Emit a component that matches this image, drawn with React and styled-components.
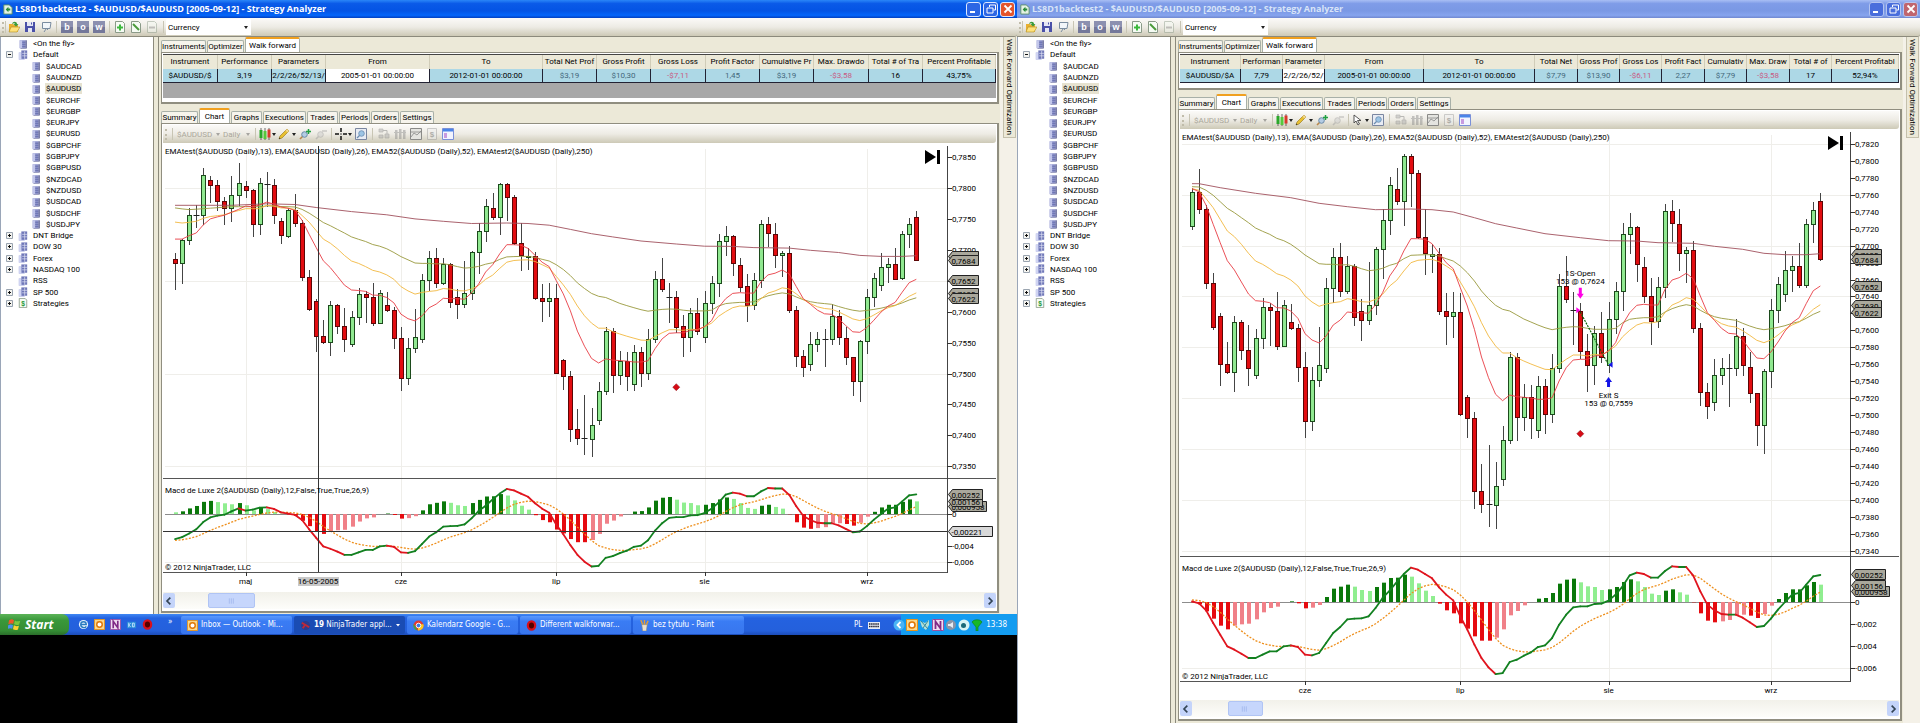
import React from "react";
import styled, { createGlobalStyle, css } from "styled-components";

const UI_FONT = 'Roboto, "Liberation Sans", sans-serif';
const CHART_FONT = 'Roboto, "Liberation Sans", sans-serif';

const GlobalStyle = createGlobalStyle`
  * { box-sizing: border-box; }
  body { margin: 0; background: #000; font-family: ${UI_FONT}; font-size: 8px; line-height: 11px; color: #000; }
  button, select { font: inherit; color: inherit; margin: 0; padding: 0; border: 0; background: none; }
  ul { list-style: none; margin: 0; padding: 0; }
`;

/* ---------- market data ---------- */

const TICKS_PER_PIP = 2.5417;
const toPips = (t) => 7837.3 - t / TICKS_PER_PIP;

// [direction, body top, body bottom, high, low], in ticks below the ceiling price
const CANDLES = [
  ["d", 387, 405, 362, 516], ["u", 309, 405, 305, 490], ["u", 207, 309, 177, 329], ["x", 205, 207, 164, 261],
  ["u", 42, 206, 14, 247], ["d", 62, 83, 44, 157], ["d", 83, 149, 62, 191], ["d", 149, 179, 132, 247],
  ["u", 125, 179, 47, 233], ["u", 75, 125, -6, 168], ["d", 88, 103, 65, 136], ["d", 103, 244, 99, 298],
  ["u", 75, 244, 55, 290], ["x", 77, 80, 29, 175], ["d", 82, 206, 60, 243], ["d", 232, 290, 218, 327],
  ["u", 187, 291, 177, 301], ["d", 187, 240, 119, 255], ["d", 240, 460, 228, 478], ["d", 460, 593, 430, 602],
  ["d", 560, 703, 550, 770], ["d", 703, 727, 638, 735], ["u", 577, 727, 560, 787], ["d", 577, 661, 573, 693],
  ["d", 661, 716, 586, 770], ["u", 626, 737, 600, 750], ["u", 532, 626, 505, 658], ["d", 532, 543, 520, 650],
  ["d", 544, 650, 487, 661], ["u", 526, 650, 513, 654], ["d", 577, 597, 524, 603], ["d", 596, 712, 585, 757],
  ["d", 712, 875, 667, 927], ["u", 751, 875, 712, 905], ["u", 706, 751, 594, 773], ["u", 475, 715, 447, 732],
  ["u", 384, 475, 355, 520], ["d", 384, 486, 342, 504], ["u", 409, 486, 381, 494], ["d", 409, 564, 404, 590],
  ["d", 544, 572, 508, 635], ["u", 526, 572, 397, 587], ["u", 358, 526, 352, 556], ["u", 271, 358, 240, 450],
  ["u", 168, 271, 142, 317], ["d", 178, 214, 117, 227], ["u", 79, 214, 74, 290], ["d", 79, 132, 74, 232],
  ["d", 132, 323, 123, 328], ["d", 322, 371, 238, 437], ["u", 373, 379, 343, 431], ["d", 373, 545, 356, 557],
  ["d", 545, 560, 491, 647], ["u", 547, 560, 487, 626], ["d", 547, 854, 491, 859], ["d", 802, 866, 798, 926],
  ["d", 867, 1085, 847, 1138], ["d", 1084, 1124, 1003, 1150], ["x", 1123, 1125, 947, 1193], ["u", 1070, 1126, 998, 1200],
  ["u", 931, 1049, 890, 1070], ["u", 682, 931, 667, 945], ["d", 682, 863, 672, 936], ["u", 804, 863, 763, 905],
  ["d", 804, 867, 768, 929], ["u", 769, 901, 740, 927], ["d", 769, 854, 750, 914], ["u", 716, 854, 673, 882],
  ["u", 469, 716, 434, 732], ["d", 469, 509, 381, 521], ["x", 542, 544, 487, 648], ["d", 544, 665, 520, 689],
  ["d", 664, 707, 615, 789], ["u", 610, 707, 590, 767], ["d", 610, 682, 547, 700], ["u", 568, 707, 517, 730],
  ["u", 484, 568, 458, 613], ["u", 313, 484, 282, 544], ["u", 292, 314, 250, 373], ["d", 292, 404, 290, 457],
  ["d", 412, 500, 384, 521], ["d", 499, 575, 447, 647], ["u", 472, 575, 444, 596], ["u", 244, 472, 225, 505],
  ["d", 244, 281, 213, 338], ["d", 283, 371, 240, 425], ["u", 361, 371, 354, 462], ["d", 361, 595, 334, 610],
  ["d", 595, 787, 580, 831], ["d", 787, 830, 761, 870], ["u", 736, 817, 688, 845], ["u", 715, 736, 686, 767],
  ["x", 715, 717, 674, 832], ["u", 619, 716, 570, 740], ["d", 619, 707, 596, 740], ["d", 712, 790, 667, 822],
  ["d", 790, 887, 790, 951], ["u", 724, 887, 719, 973], ["u", 543, 724, 510, 776], ["u", 463, 543, 443, 582],
  ["u", 421, 493, 364, 518], ["u", 409, 421, 381, 487], ["d", 409, 467, 342, 475], ["u", 283, 466, 270, 475],
  ["u", 241, 283, 218, 342], ["d", 214, 389, 190, 396],
];

const EMA13 = [
  305, 305, 291, 280, 247, 222, 214, 207, 195, 183, 169, 172, 165, 153, 161, 173,
  178, 187, 228, 285, 340, 394, 422, 458, 494, 514, 516, 520, 535, 536, 545, 567, 613, 632, 641, 620, 587, 572, 548, 550,
  550, 552, 526, 490, 440, 410, 365, 328, 328, 330, 343, 372, 400, 418, 475, 530, 600, 683, 745, 795, 814, 797, 802, 804,
  806, 810, 810, 805, 755, 715, 692, 690, 690, 680, 678, 665, 640, 585, 550, 528, 525, 527, 527, 480, 452, 445, 432, 448,
  500, 550, 573, 597, 612, 614, 632, 660, 686, 688, 668, 638, 605, 580, 565, 523, 484, 470,
];
const EMA26 = [
  235, 239, 236, 232, 220, 212, 209, 205, 195, 188, 180, 180, 180, 166, 170, 177,
  178, 183, 208, 235, 270, 305, 322, 345, 372, 395, 405, 418, 433, 440, 452, 470, 500, 518, 531, 524, 520, 517, 508, 511,
  517, 518, 510, 495, 470, 453, 425, 400, 393, 391, 390, 397, 410, 424, 458, 493, 532, 580, 620, 650, 671, 671, 685, 695,
  704, 712, 720, 721, 705, 690, 677, 677, 680, 675, 677, 665, 650, 622, 603, 587, 580, 581, 577, 550, 527, 518, 505, 510,
  530, 553, 570, 583, 590, 593, 604, 618, 633, 640, 632, 617, 600, 587, 578, 560, 540, 526,
];
const EMA52 = [
  177, 181, 184, 182, 180, 178, 176, 174, 172, 172, 172, 172, 172, 169, 168, 171,
  172, 173, 183, 198, 217, 237, 250, 265, 280, 296, 306, 315, 327, 334, 345, 360, 377, 390, 403, 405, 405, 407, 406, 411,
  418, 424, 422, 417, 408, 402, 388, 378, 377, 376, 376, 380, 388, 395, 410, 430, 455, 485, 508, 528, 540, 545, 557, 569,
  578, 587, 595, 601, 597, 594, 592, 593, 597, 600, 600, 600, 597, 580, 570, 567, 565, 565, 562, 548, 538, 531, 526, 530,
  543, 554, 562, 567, 570, 573, 582, 590, 597, 601, 598, 594, 589, 582, 577, 567, 555, 546,
];
// the slow average is given by its turning points: [bar, tick]
const EMA250 = [
  [0, 166], [8, 166], [13, 160], [17, 163], [20, 175], [25, 192], [30, 205], [34, 222], [38, 232], [42, 241], [47, 239],
  [50, 241], [53, 248], [56, 265], [59, 283], [62, 296], [66, 313], [71, 325], [75, 334], [79, 335], [82, 340], [87, 342],
  [90, 351], [94, 360], [97, 372], [100, 376], [103, 376], [105, 373],
];

// MACD values, 33.2 units to 0.001
const MACD = [
  275, 267, 252, 235, 205, 186, 179, 175, 161, 149, 158, 154, 146, 145, 151, 165,
  170, 176, 197, 235, 270, 305, 315, 327, 340, 340, 330, 320, 320, 305, 302, 307, 330, 332, 325, 295, 265, 247, 224, 222,
  221, 215, 190, 160, 138, 112, 88, 69, 75, 88, 101, 128, 150, 167, 215, 255, 300, 340, 368, 388, 385, 352, 345, 333,
  323, 307, 302, 280, 240, 210, 188, 185, 185, 178, 177, 168, 150, 125, 92, 84, 88, 99, 99, 79, 65, 67, 67, 93,
  140, 180, 197, 208, 210, 210, 219, 233, 247, 244, 222, 195, 172, 150, 145, 120, 95, 91,
].map((v) => 172 - v);
const HISTOGRAM = [
  7, 11, 23, 33, 50, 54, 49, 44, 40, 45, 36, 15, 25, 20, 8, 2,
  -1, -7, -28, -50, -71, -82, -71, -67, -65, -52, -31, -18, -14, 0, 2, -4, -19, -17, -9, 15, 40, 46, 52, 46,
  36, 33, 45, 58, 72, 73, 82, 76, 56, 34, 18, -5, -25, -34, -64, -80, -103, -116, -116, -107, -82, -40, -27, -10,
  0, 10, 12, 27, 55, 67, 70, 59, 47, 45, 36, 38, 45, 60, 68, 62, 45, 25, 21, 34, 38, 29, 22, -1,
  -34, -56, -61, -58, -54, -39, -38, -41, -48, -36, -11, 9, 27, 38, 38, 50, 60, 52,
];
const SIGNAL = MACD.reduce((out, v) => {
  const last = out.length ? out[out.length - 1] : -110;
  return [...out, last + 0.2 * (v - last)];
}, []);
const MONTHS = [[10, "maj"], [32, "cze"], [54, "lip"], [75, "sie"], [98, "wrz"]];

/* ---------- chart ---------- */

const ChartSvg = styled.svg`
  display: block;
  width: 100%;
  height: auto;
  background: #fff;
  font: 8px ${CHART_FONT};
  text { fill: #000; }
`;

const half = (v) => Math.round(v) + 0.5;
const price = (p) => `0,${p}`;

function Tag({ x, y, w, label, light }) {
  const X = half(x);
  const Y = half(y);
  return (
    <g>
      <path d={`M${X} ${Y} l4 -5 h${w} v10 h-${w} z`} fill={light ? "#d8d8d8" : "#aaa89c"} stroke="#222" />
      <text x={X + 3} y={Y + 3}>{label}</text>
    </g>
  );
}

function Chart({ spec }) {
  const { w, h, first, x0, axis, refPrice, refY, perPip, split, zero, perMilli, base } = spec;
  const px = (i) => x0 + (i - first) * 7.06;
  const py = (p) => refY + (refPrice - p) * perPip;
  const ty = (t) => py(toPips(t));
  const my = (v) => zero - (v / 33.2) * perMilli;
  const line = (arr) => arr.slice(first).map((t, k) => `${px(k + first).toFixed(1)},${ty(t).toFixed(1)}`).join(" ");
  const slow = EMA250.filter(([i]) => i >= first).map(([i, t]) => `${px(i).toFixed(1)},${ty(t).toFixed(1)}`);
  if (first > 0) slow.unshift(`${px(first)},${ty(163)}`);
  const months = MONTHS.filter(([i]) => i > first);
  return (
    <ChartSvg viewBox={`0 0 ${w} ${h}`} role="img" aria-label="AUDUSD daily chart">
      <g stroke="#efeeea">
        {spec.grid.map((p) => <path key={p} d={`M2 ${half(py(p))}H${axis}`} />)}
        <path d={`M2 ${half(zero + 6 * perMilli)}H${axis}`} />
        {months.map(([i]) => <path key={i} d={`M${half(px(i))} 6V${base}`} />)}
      </g>
      <path d={`M2 ${half(zero)}H${axis}`} stroke="#8c8c8c" />
      {HISTOGRAM.map((v, i) => {
        if (i < first || v === 0) return null;
        const prev = i > 0 ? HISTOGRAM[i - 1] : v * 2;
        const grows = v * prev <= 0 || Math.abs(v) >= Math.abs(prev);
        const fill = v > 0 ? (grows ? "#0a780a" : "#90ee90") : grows ? "#e60a0f" : "#f08088";
        return <rect key={i} x={Math.round(px(i)) - 1} y={Math.min(my(v), zero)} width="4" height={Math.abs(my(v) - zero)} fill={fill} />;
      })}
      <polyline fill="none" stroke="#ee8f1c" strokeWidth="1.3" strokeDasharray="2 1.5" points={SIGNAL.slice(first).map((v, k) => `${px(k + first)},${my(v)}`).join(" ")} />
      {MACD.map((v, i) => i <= first ? null : (
        <path key={i} d={`M${px(i - 1)} ${my(MACD[i - 1])}L${px(i)} ${my(v)}`} strokeWidth="1.8" strokeLinecap="round" stroke={v >= MACD[i - 1] ? "#128020" : "#e0141e"} />
      ))}
      {CANDLES.map(([dir, top, bottom, high, low], i) => {
        if (i < first) return null;
        const x = half(px(i));
        const t = half(ty(top));
        const b = half(ty(bottom));
        return (
          <g key={i} stroke="#222">
            <path d={`M${x} ${Math.round(ty(high))}V${Math.round(ty(low))}`} stroke="#444" />
            {dir === "x"
              ? <path d={`M${x - 3} ${t}H${x + 3}`} />
              : <rect x={x - 2} y={t} width="4" height={Math.max(1, b - t)} fill={dir === "u" ? "#90e890" : "#e20c10"} stroke={dir === "u" ? "#1c4a1c" : "#5c0606"} />}
          </g>
        );
      })}
      <g fill="none" strokeWidth="0.9">
        <polyline points={slow.join(" ")} stroke="#a0505c" />
        <polyline points={line(EMA52)} stroke="#98983c" />
        <polyline points={line(EMA26)} stroke="#f2b840" />
        <polyline points={line(EMA13)} stroke="#e83c44" />
      </g>
      <path d={`M${px(71)} ${py(7478) - 3.5}l3.5 3.5l-3.5 3.5l-3.5 -3.5z`} fill="#d80a14" stroke="#801018" strokeWidth="0.5" />
      {spec.trades && (
        <g textAnchor="middle">
          <path d={`M${px(71)} ${ty(548)}L${px(75)} ${ty(707)}`} stroke="#0a640a" strokeDasharray="2 1" strokeWidth="1.2" />
          <text x={px(71)} y={ty(430) + 3}>1S-Open</text>
          <text x={px(71)} y={ty(456) + 3}>153 @ 0,7624</text>
          <path d={`M${px(71) - 1.5} ${ty(475)}h3v6h2l-3.5 5l-3.5 -5h2z`} fill="#ff00e6" />
          <path d={`M${px(71)} ${ty(543)}l-4 -3v6z`} fill="#ff00e6" />
          <path d={`M${px(75)} ${ty(706)}l4 -3v6z`} fill="#1414e6" />
          <path d={`M${px(75) - 1.5} ${ty(773)}h3v-5h2l-3.5 -5l-3.5 5h2z`} fill="#1414e6" />
          <text x={px(75)} y={ty(796) + 3}>Exit S</text>
          <text x={px(75)} y={ty(822) + 3}>153 @ 0,7559</text>
        </g>
      )}
      <path d={`M0 ${half(split)}H${w}M0 ${half(base)}H${axis}`} stroke="#555" />
      <path d={`M${half(axis)} 3V${base + 1}`} stroke="#444" />
      {spec.cursor && <path d={`M${half(spec.cursor.x)} 3V${base}M0 ${half(spec.cursor.y)}H${axis}`} stroke="#333" />}
      {spec.labels.map((p) => (
        <g key={p}>
          <path d={`M${axis} ${half(py(p))}h5`} stroke="#333" />
          <text x={axis + 5} y={py(p) + 3}>{price(p)}</text>
        </g>
      ))}
      {spec.macdLabels.map(([v, label]) => (
        <g key={label}>
          <path d={`M${axis} ${half(zero - v * perMilli)}h5`} stroke="#333" />
          <text x={axis + 5} y={zero - v * perMilli + 3}>{label}</text>
        </g>
      ))}
      {[7690, 7684, 7652, 7630, 7622].map((p) => <Tag key={p} x={axis + 1} y={py(p)} w={26} label={price(p)} />)}
      <Tag x={axis + 1} y={zero - 0.96 * perMilli} w={34} label="0,000958" />
      <Tag x={axis + 1} y={zero - 1.56 * perMilli} w={30} label="0,00156" />
      <Tag x={axis + 1} y={zero - 2.52 * perMilli} w={30} label="0,00252" />
      {spec.cursor && <Tag light x={axis + 1} y={spec.cursor.y} w={40} label="-0,00221" />}
      <path d={`M${axis - 22} 7v14l11 -7z`} fill="#000" />
      <rect x={axis - 10} y="7" width="3" height="14" fill="#000" />
      <text x="2" y="11">EMAtest($AUDUSD (Daily),13), EMA($AUDUSD (Daily),26), EMA52($AUDUSD (Daily),52), EMAtest2($AUDUSD (Daily),250)</text>
      <text x="2" y={split + 15}>Macd de Luxe 2($AUDUSD (Daily),12,False,True,True,26,9)</text>
      <text x="2" y={base - 2}>© 2012 NinjaTrader, LLC</text>
      {months.map(([i, label]) => (
        <g key={label}>
          <path d={`M${half(px(i))} ${base}v4`} stroke="#333" />
          <text x={px(i)} y={base + 12} textAnchor="middle">{label}</text>
        </g>
      ))}
      {spec.cursor && (
        <g>
          <rect x={spec.cursor.x - 20} y={base + 5} width="41" height="9" fill="#c8c8c8" />
          <text x={spec.cursor.x} y={base + 12} textAnchor="middle">16-05-2005</text>
        </g>
      )}
    </ChartSvg>
  );
}

const LEFT_CHART = {
  w: 833, h: 449, first: 0, x0: 12, axis: 784, refPrice: 7850, refY: 14, perPip: 0.6187, split: 335,
  zero: 371, perMilli: 8.07, base: 429, grid: [7800, 7650, 7500, 7350],
  labels: [7850, 7800, 7750, 7700, 7650, 7600, 7550, 7500, 7450, 7400, 7350],
  macdLabels: [[0, "0"], [-4, "-0,004"], [-6, "-0,006"]], cursor: { x: 155, y: 388 },
};
const RIGHT_CHART = {
  w: 719, h: 571, first: 16, x0: 12, axis: 670, refPrice: 7820, refY: 15, perPip: 0.8472, split: 427,
  zero: 473, perMilli: 11.07, base: 552, grid: [7820, 7760, 7700, 7640, 7580, 7520, 7460, 7400, 7340],
  labels: Array.from({ length: 25 }, (_, i) => 7820 - i * 20),
  macdLabels: [[0, "0"], [-2, "-0,002"], [-4, "-0,004"], [-6, "-0,006"]], trades: true,
};

/* ---------- icons ---------- */

const Icon = styled.svg`
  display: block;
  flex: none;
  width: ${(p) => p.$s || 12}px;
  height: ${(p) => p.$s || 12}px;
  opacity: ${(p) => (p.$off ? 0.45 : 1)};
`;
const Glyph = ({ name, s, off }) => (
  <Icon viewBox="0 0 12 12" $s={s} $off={off} aria-hidden="true">{GLYPHS[name]}</Icon>
);
const page = <path d="M1.500 .5h7l2 2v9h-9z" fill="#f6fbf4" stroke="#8a9a88" />;
const letter = (ch) => (
  <g>
    <rect width="12" height="12" fill="#74789a" /><path d="M0 0h12v6H0z" fill="#8c90b0" />
    <text x="6" y="9" textAnchor="middle" fontFamily="Liberation Sans" fontWeight="700" fontSize="9" fill="#fff">{ch}</text>
  </g>
);
const sheet = <path d="M.5 .5h11v11H.5z" fill="#e8ecf4" stroke="#7a86a0" />;
const GLYPHS = {
  app: <g><path d="M2 1h6l3 3v7H2z" fill="#e4f2e4" stroke="#5b8f6a" /><path d="M4 6l3-3v2h2v2H7v2z" fill="#2a8a3a" /></g>,
  folder: <g><path d="M1 11V3h4l1 1h4v7z" fill="#e8b030" /><path d="M1 11l2-5h9l-3 5z" fill="#ffe27a" stroke="#b08a20" strokeWidth=".6" /><path d="M4 3c1-3.500 5-2.500 5 0h1.500L8 5.500 5.500 3H7c0-1-1.500-1-3 0z" fill="#3a9a3a" /></g>,
  save: <g><path d="M1 1h10v10H1z" fill="#4a50a8" /><path d="M3 1h6v4H3zM4 7h4v4H4z" fill="#e4e6f4" /><path d="M7 1.500h1v2H7z" fill="#4a50a8" /></g>,
  monitor: <g><path d="M2.500 1.500h8.500l-1 6h-7.500z" fill="#f2f6fa" stroke="#7a8ca0" /><path d="M6 8L4 11M7 8l1 1" stroke="#7a8ca0" /></g>,
  b: letter("b"), o: letter("o"), w: letter("w"),
  plus: <g>{page}<path d="M6 3.500v6M3 6.500h6" stroke="#3cb83c" strokeWidth="2" /></g>,
  edit: <g>{page}<path d="M3 3l6 6" stroke="#4a9a3a" strokeWidth="2" /></g>,
  minus: <g>{page}<path d="M3 6.500h6" stroke="#8a8a8a" strokeWidth="2" /></g>,
  db: <g><path d="M2 1.500h7v9.500H2z" fill="#8a90c8" /><path d="M2 1.500h3v9.500H2z" fill="#c2c6ea" /><path d="M9 1.500h1.500V11.500H3v-.7h6z" fill="#50548c" /><path d="M5 4h4M5 6.500h4M5 9h4" stroke="#5c64a4" strokeWidth=".7" /></g>,
  dbs: <g><path d="M1 3h7v8.500H1z" fill="#a8aede" /><path d="M4 .5h7v10H4z" fill="#7078b8" /><path d="M1 3h3v8.500H1z" fill="#d0d4f2" /><path d="M8 1v9.500M5 4h6M5 7h6" stroke="#e4e6f6" strokeWidth=".8" /></g>,
  money: <g>{page}<text x="6" y="9" textAnchor="middle" fontFamily="Liberation Sans" fontWeight="700" fontSize="8" fill="#2a9a3a">$</text></g>,
  candles: <g><path d="M2 0v12M6 0v12M10 0v12" stroke="#333" strokeWidth=".7" /><path d="M.5 2h3v8h-3z" fill="#2aa82a" /><path d="M4.500 3h3v8h-3z" fill="#56c83c" /><path d="M8.500 1.500h3v8h-3z" fill="#d83a2a" /></g>,
  pencil: <g><path d="M1 11l1-3 7-7 2 2-7 7z" fill="#e8c030" stroke="#907018" strokeWidth=".6" /><path d="M9 1l2 2-1.500 1.500-2-2z" fill="#f2d890" /><path d="M1 11l.5-1.500 1 1z" fill="#222" /></g>,
  zoomIn: <g><path d="M1 11l3-3" stroke="#b8864a" strokeWidth="1.600" /><circle cx="5.500" cy="6.500" r="2.800" fill="#b4cce4" stroke="#6a8aa8" /><path d="M9.500 1v5M7 3.500h5" stroke="#20a040" strokeWidth="1.500" /></g>,
  zoomOut: <g><path d="M1 11l3-3" stroke="#999" strokeWidth="1.600" /><circle cx="5.500" cy="6.500" r="2.800" fill="#ccc" stroke="#999" /><path d="M7 3h5" stroke="#999" strokeWidth="1.500" /></g>,
  cross: <path d="M6 0v4M6 8v4M0 6h4M8 6h4M5.500 6h1" stroke="#111" strokeWidth="1.500" />,
  arrow: <path d="M2 1v8l2-2 2 4 1.500-1-2-3.500H9z" fill="#fff" stroke="#444" strokeWidth=".9" />,
  preview: <g>{sheet}<circle cx="6.500" cy="5.500" r="2.800" fill="#9cc4e4" stroke="#6a8cb0" strokeWidth=".8" /><path d="M2 10l2.500-2.500" stroke="#6a8cb0" strokeWidth="1.300" /></g>,
  flow: <g><path d="M1 1h4v3H1zM7 6h4v4H7zM1 7h4v3H1z" fill="#aaa" stroke="#777" strokeWidth=".7" /><path d="M5 2.500h4V6" stroke="#777" fill="none" /></g>,
  bars: <g fill="#888"><path d="M1 2h2.500v9H1zM5 1h2.500v10H5zM9 2h2.500v9H9z" /><path d="M0 4h12v1H0z" /></g>,
  graph: <g><path d="M.5 .5h11v11H.5z" fill="#e4e4e0" stroke="#8a8a88" /><path d="M1 9l3-4 3 2 4-4M1 4h10" stroke="#888" strokeWidth=".8" fill="none" /></g>,
  cash: <g><path d="M1.500 .5h9v11h-9z" fill="#eee" stroke="#999" /><text x="6" y="9" textAnchor="middle" fontFamily="Liberation Sans" fontWeight="700" fontSize="8" fill="#666">$</text></g>,
  props: <g><path d="M.5 .5h11v11H.5z" fill="#f2f4ff" stroke="#7a90d8" /><path d="M1 1h10v2.500H1z" fill="#4a84e8" /><path d="M2 5h3v5H2z" fill="#c89ae0" /></g>,
  flag: <g><path d="M1 2c2-1 3-1 4.500 0L4.800 5.500C3.500 5 2 5 .3 5.700z" fill="#f0562a" /><path d="M6.300 2.300c1.500 1 3 1 5 .2l-1 3.500c-1.500.7-3 .6-4.700-.2z" fill="#7ac83c" /><path d="M.2 6.600c1.600-.8 3-.8 4.400 0L4 10c-1.300-.8-2.700-.8-4.300 0z" fill="#4a90f0" /><path d="M5.400 6.800c1.500.9 3 1 4.700.3L9.200 10.500c-1.500.8-3 .6-4.600-.2z" fill="#fcd030" /></g>,
  ie: <g><circle cx="6" cy="6" r="5" fill="#e8f4fc" /><path d="M3 6h6c0-4-6-4-6 0s5 4 6 2" fill="none" stroke="#2a7ac0" strokeWidth="1.500" /></g>,
  outlook: <g><path d="M.5 .5h11v11H.5z" fill="#fbd88a" stroke="#e8941a" /><circle cx="6" cy="6" r="3" fill="#fff" stroke="#e07808" strokeWidth="1.600" /></g>,
  onenote: <g><path d="M.5 .5h11v11H.5z" fill="#f0dcf0" stroke="#a050a0" /><path d="M3.500 10V2.500L8.500 9.500V2" fill="none" stroke="#802a86" strokeWidth="1.800" /></g>,
  desk: <g><path d="M1 3h10v7H1z" fill="#2a8ad8" /><path d="M3 4v5M3 6.500l2-2M3 6.500l2 2M7 4.500h2v4H7z" fill="none" stroke="#c8e8ff" /></g>,
  opera: <ellipse cx="6" cy="6" rx="4" ry="4.500" fill="#500" stroke="#d8101c" strokeWidth="2.400" />,
  ninja: <g><circle cx="6" cy="6" r="5" fill="#2c3c8c" /><path d="M2 3l8 5M3 9l2-3" stroke="#c02838" strokeWidth="2" /></g>,
  chrome: <g><circle cx="6" cy="6" r="5.500" fill="#e23c30" /><path d="M.8 4L5 11.400A5.500 5.500 0 0 1 .8 4" fill="#34a850" /><path d="M11.400 4.500H6L5.500 11.400A5.500 5.500 0 0 0 11.400 4.500" fill="#fbc820" /><circle cx="6" cy="6" r="2.500" fill="#3a78e8" stroke="#fff" /></g>,
  paint: <g><path d="M3 5h6l-1 7H4z" fill="#e8e0d0" stroke="#887" strokeWidth=".6" /><path d="M4 5L2 0M6 5V0M8 5l2-4" stroke="#e8a030" strokeWidth="1.500" /></g>,
  keyboard: <g><path d="M0 3h12v7H0z" fill="#e8ecf4" /><path d="M1 5h10M1 7.500h10" stroke="#223" strokeDasharray="1.500 .6" strokeWidth="1.500" /></g>,
  chevron: <g><circle cx="6" cy="6" r="5.500" fill="#4ab4f4" /><path d="M7.500 3L4.500 6l3 3" stroke="#fff" strokeWidth="1.800" fill="none" /></g>,
  net: <g><path d="M1 2l5 2 4-3v5l-3 5-4-3z" fill="#b4e0d8" /><path d="M2 2l7 8M9 2L4 9" stroke="#3a8a98" /></g>,
  sound: <g><circle cx="6" cy="6" r="5" fill="#8a94a8" /><path d="M3 5h2l3-2v6L5 7H3z" fill="#e8ecf4" /></g>,
  eye: <g><circle cx="6" cy="6" r="5.500" fill="#d8f4f4" /><circle cx="5.500" cy="6.500" r="2.500" fill="#1c6a78" /></g>,
  shield: <path d="M1 3c2-3 8-3 10 0L7 8v4H5V8z" fill="#18b828" stroke="#0a7a1a" strokeWidth=".6" />,
};

/* ---------- window chrome ---------- */

const Desktop = styled.div`
  display: flex;
  align-items: stretch;
  min-height: 100vh;
  background: #000;
`;
const Monitor = styled.section`
  flex: ${(p) => p.$grow} 1 0;
  min-width: 0;
  display: flex;
  flex-direction: column;
`;
const Window = styled.div`
  flex: ${(p) => (p.$fill ? 1 : "none")};
  display: flex;
  flex-direction: column;
  background: #ece9d8;
`;
const TitleBar = styled.header`
  height: 18px;
  display: flex;
  align-items: center;
  gap: 2px;
  padding: 0 2px;
  color: ${(p) => (p.$active ? "#fff" : "#d8e4f8")};
  background: ${(p) => p.$active
    ? "linear-gradient(#2a86f8 0, #0a5ae8 20%, #0454e4 60%, #0466fa 85%, #0340c0)"
    : "linear-gradient(#a8bef4 0, #7f9ce8 20%, #7a98e4 60%, #86a4ee 85%, #7088d0)"};
`;
const Title = styled.h1`
  flex: 1;
  margin: 0;
  min-width: 0;
  overflow: hidden;
  white-space: nowrap;
  font: bold 9px/14px "Open Sans", "Noto Sans", sans-serif;
`;
const WinButton = styled.button`
  flex: none;
  width: 15px;
  height: 15px;
  display: grid;
  place-items: center;
  border: 1px solid ${(p) => (p.$active ? "#dce8ff" : "#b4c4f0")};
  border-radius: 3px;
  background: ${(p) => p.$close ? (p.$active ? "#e4552c" : "#c0656e") : p.$active ? "#2c66e4" : "#4a6edc"};
`;
const Bar = styled.div`
  height: ${(p) => p.$h}px;
  display: flex;
  align-items: center;
  padding-left: 2px;
  background: linear-gradient(#fbfaf8, #edebe4 50%, #cdc9b6);
  border-bottom: ${(p) => (p.$line ? "1px solid #8c8a7c" : "0")};
  border-radius: 0 0 3px 0;
`;
const Grip = styled.i`
  width: 3px;
  height: 11px;
  border-left: 2px dotted #c0bcaa;
`;
const Sep = styled.i`
  width: ${(p) => p.$w}px;
  height: 12px;
  background: linear-gradient(#c8c5b4, #c8c5b4) center / 1px 100% no-repeat;
`;
const Tool = styled.button`
  flex: none;
  width: ${(p) => p.$w || 16}px;
  height: 16px;
  display: grid;
  place-items: center;
`;
const Caret = styled.i`
  flex: none;
  width: 4px;
  margin: 0 1px;
  border: 2px solid transparent;
  border-top: 3px solid #222;
  border-bottom: 0;
  opacity: ${(p) => (p.$off ? 0.35 : 1)};
`;
const Pick = styled.label`
  display: flex;
  align-items: center;
  width: ${(p) => p.$w}px;
  height: 16px;
  padding: 0 2px 0 ${(p) => (p.$box ? 2 : 0)}px;
  background: ${(p) => (p.$box ? "#fff" : "transparent")};
  select { flex: 1; min-width: 0; appearance: none; outline: 0; opacity: 1; color: ${(p) => (p.$box ? "#000" : "#aaa79a")}; }
`;

const Body = styled.div`
  flex: 1;
  display: flex;
`;
const Tree = styled.nav`
  flex: none;
  width: 153px;
  padding: 1px 0 0 4px;
  background: #fff;
  border-left: 1px solid #9aa6b8;
`;
const TreeList = styled.ul`
  height: 271px;
  display: grid;
  grid-auto-rows: 1fr;
`;
const TreeRow = styled.li`
  display: flex;
  align-items: center;
  min-height: 0;
  padding-left: ${(p) => (p.$deep ? 26 : 0)}px;
`;
const TreeToggle = styled.button`
  flex: none;
  width: 13px;
  height: 9px;
`;
const TreeLink = styled.button`
  display: flex;
  align-items: center;
  gap: 4px;
  text-align: left;
  height: 11px;
  span { padding: 0 1px; background: ${(p) => (p.$on ? "#e6e2d0" : "none")}; }
`;
const Splitter = styled.div`
  flex: none;
  width: 6px;
  background: #ece9d8;
  border: solid #8c8a7c;
  border-width: 0 1px;
`;
const Main = styled.main`
  flex: 1;
  min-width: 0;
  padding: 0 1px 1px 2px;
  display: flex;
  flex-direction: column;
`;
const Side = styled.aside`
  flex: none;
  width: 17px;
  padding-left: 3px;
  background: #f4f1e8;
`;
const SideTab = styled.button`
  display: flex;
  align-items: center;
  justify-content: center;
  width: 13px;
  height: 101px;
  writing-mode: vertical-rl;
  background: #ece9d8;
  border: 1px solid #c4c0ac;
  border-top: 0;
  white-space: nowrap;
`;
const Tabs = styled.div`
  display: flex;
  align-items: flex-end;
  height: 15px;
  margin-top: ${(p) => p.$top}px;
  gap: 1px;
`;
const Tab = styled.button`
  width: ${(p) => p.$w}px;
  height: 12px;
  line-height: 10px;
  white-space: nowrap;
  background: #f6f4ec;
  border: 1px solid #a8b0a8;
  border-bottom: 0;
  border-radius: 2px 2px 0 0;
  ${(p) => p.$on && css`
    height: 15px;
    background: #fff;
    border-top: 2px solid #f0a020;
  `}
`;
const Panel = styled.div`
  padding: 1px 1px 2px;
  background: #fff;
  border: solid #908e80;
  border-width: 1px 2px 2px 1px;
`;
const TableBox = styled.div`
  height: ${(p) => p.$h}px;
  border-top: 1px solid #444;
`;
const TableFill = styled.div`
  height: ${(p) => p.$h}px;
  background: #a8a8a8;
`;
const Results = styled.table`
  width: 100%;
  table-layout: fixed;
  border-collapse: separate;
  border-spacing: 0;
  th, td { height: 14px; padding: 0; text-align: center; white-space: nowrap; line-height: 12px; }
  th { font-weight: normal; background: #ece9d8; border-right: 1px solid #d0ccb8; }
`;
const Column = styled.col`
  width: ${(p) => p.$w}px;
`;
const TONES = { plain: "#000", gain: "#44687c", loss: "#c85a84" };
const Cell = styled.td`
  color: ${(p) => TONES[p.$tone]};
  background: ${(p) => (p.$edit ? "#fff" : "#add8e6")};
  border: solid #223;
  border-width: 0 1px 1px 0;
`;
const Scroll = styled.div`
  height: 17px;
  display: flex;
  align-items: center;
  justify-content: space-between;
  background: linear-gradient(#f2f1ea, #fdfdfa);
`;
const ScrollArrow = styled.button`
  width: 12px;
  height: 15px;
  border-radius: 2px;
  background: #c4d4fa;
  display: grid;
  place-items: center;
`;
const ScrollTrack = styled.div`
  flex: 1;
  padding-left: ${(p) => p.$at}%;
`;
const ScrollThumb = styled.div`
  width: ${(p) => p.$w}px;
  height: 15px;
  border: 1px solid #b0c4f4;
  border-radius: 2px;
  display: grid;
  place-items: center;
  background: #c6d6fc;
`;

/* ---------- taskbar ---------- */

const Taskbar = styled.footer`
  height: 21px;
  display: flex;
  align-items: stretch;
  background: linear-gradient(#4088f4, #2462e0 20%, #2460dc 80%, #1c4cb8);
  color: #fff;
  font: 8px/12px "DejaVu Sans Condensed", "DejaVu Sans", sans-serif;
`;
const Start = styled.button`
  width: 69px;
  display: flex;
  align-items: center;
  gap: 4px;
  padding-left: 8px;
  border-radius: 0 7px 7px 0;
  background: linear-gradient(#5cb458, #3a983a 30%, #348c34 80%, #2a6e2a);
  font: italic bold 12px/16px "Open Sans", sans-serif;
`;
const Quick = styled.div`
  width: 112px;
  display: flex;
  align-items: center;
  gap: 5px;
  padding-left: 9px;
  span { margin: 0 0 6px 10px; }
`;
const Task = styled.button`
  width: 111px;
  margin: 2px 2px 1px 0;
  padding: 0 4px 0 6px;
  display: flex;
  align-items: center;
  gap: 3px;
  white-space: nowrap;
  border-radius: 2px;
  background: ${(p) => (p.$on ? "#1a4cb4" : "linear-gradient(#5a98fc, #3a7cf4 30%, #3876ee)")};
  span { flex: 1; text-align: left; }
`;
const Lang = styled.div`
  margin-left: auto;
  width: 33px;
  display: flex;
  align-items: center;
  gap: 6px;
  margin-right: 6px;
`;
const Tray = styled.div`
  width: 124px;
  display: flex;
  align-items: center;
  gap: 1px;
  padding: 0 10px 0 0;
  background: linear-gradient(90deg, transparent 8px, #149cf0 8px);
  time { margin-left: auto; }
`;

/* ---------- content ---------- */

const TREE = [
  ["", "db", "<On the fly>"], ["-", "dbs", "Default"],
  ...["AUDCAD", "AUDNZD", "AUDUSD", "EURCHF", "EURGBP", "EURJPY", "EURUSD", "GBPCHF", "GBPJPY", "GBPUSD", "NZDCAD", "NZDUSD", "USDCAD", "USDCHF", "USDJPY"]
    .map((s) => ["deep", "db", `$${s}`]),
  ["+", "dbs", "DNT Bridge"], ["+", "dbs", "DOW 30"], ["+", "dbs", "Forex"], ["+", "dbs", "NASDAQ 100"],
  ["", "dbs", "RSS"], ["+", "dbs", "SP 500"], ["+", "money", "Strategies"],
];

const TONE_BY_COL = ["plain", "plain", "plain", "plain", "plain", "gain", "gain", "loss", "gain", "gain", "loss", "plain", "plain"];

const LEFT = {
  widths: [55, 54, 54, 104, 113, 54, 54, 55, 54, 54, 55, 54, 73],
  heads: ["Instrument", "Performance", "Parameters", "From", "To", "Total Net Prof", "Gross Profit", "Gross Loss", "Profit Factor", "Cumulative Pr", "Max. Drawdo", "Total # of Tra", "Percent Profitable"],
  cells: ["$AUDUSD/$", "3,19", "2/2/26/52/13/", "2005-01-01 00:00:00", "2012-01-01 00:00:00", "$3,19", "$10,30", "-$7,11", "1,45", "$3,19", "-$3,58", "16", "43,75%"],
  editing: 3, tableH: 46, fill: 15, pointer: "cross", chart: LEFT_CHART, thumb: [4, 47],
};
const RIGHT = {
  widths: [61, 42, 42, 99, 111, 43, 42, 42, 43, 42, 43, 42, 67],
  heads: ["Instrument", "Performan", "Parameter", "From", "To", "Total Net", "Gross Prof", "Gross Los", "Profit Fact", "Cumulativ", "Max. Draw", "Total # of", "Percent Profitabl"],
  cells: ["$AUDUSD/$A", "7,79", "2/2/26/52/", "2005-01-01 00:00:00", "2012-01-01 00:00:00", "$7,79", "$13,90", "-$6,11", "2,27", "$7,79", "-$3,58", "17", "52,94%"],
  editing: 2, tableH: 32, fill: 0, pointer: "arrow", chart: RIGHT_CHART, thumb: [5, 35],
};

function ToolIcon({ name, w, off }) {
  return <Tool type="button" aria-label={name} $w={w} disabled={off}><Glyph name={name} off={off} /></Tool>;
}

function Analyzer({ active, data }) {
  return (
    <Window $fill={!active}>
      <TitleBar $active={active}>
        <Glyph name="app" s={11} />
        <Title>LS8D1backtest2 - $AUDUSD/$AUDUSD [2005-09-12] - Strategy Analyzer</Title>
        <WinButton type="button" aria-label="Minimize" $active={active}>
          <Icon viewBox="0 0 12 12"><path d="M2 9h5" stroke="#fff" strokeWidth="2" /></Icon>
        </WinButton>
        <WinButton type="button" aria-label="Restore" $active={active}>
          <Icon viewBox="0 0 12 12"><path d="M4.500 4V2h6v5h-2M2 5h6v5H2z" fill="none" stroke="#fff" /></Icon>
        </WinButton>
        <WinButton type="button" aria-label="Close" $active={active} $close>
          <Icon viewBox="0 0 12 12"><path d="M2.500 2.500l7 7M9.500 2.500l-7 7" stroke="#fff" strokeWidth="1.800" /></Icon>
        </WinButton>
      </TitleBar>
      <Bar $h={19} $line>
        <Grip />
        <Sep $w={1} />
        <ToolIcon name="folder" /><ToolIcon name="save" /><ToolIcon name="monitor" />
        <Sep $w={5} />
        <ToolIcon name="b" /><ToolIcon name="o" /><ToolIcon name="w" />
        <Sep $w={5} />
        <ToolIcon name="plus" /><ToolIcon name="edit" /><ToolIcon name="minus" off />
        <Sep $w={6} />
        <Pick $w={85} $box>
          <select aria-label="Display unit" defaultValue="Currency"><option>Currency</option></select>
          <Caret />
        </Pick>
      </Bar>
      <Body>
        <Tree aria-label="Instrument lists">
          <TreeList>
            {TREE.map(([kind, icon, label]) => (
              <TreeRow key={label} $deep={kind === "deep"}>
                {kind !== "deep" && (
                  <TreeToggle type="button" aria-label={`Toggle ${label}`}>
                    {kind && (
                      <Icon viewBox="0 0 9 9" $s={9}>
                        <path d="M1.500 1.500h6v6h-6z" fill="#f4f4f0" stroke="#9aa4b0" />
                        <path d={kind === "+" ? "M3 4.500h3M4.500 3v3" : "M3 4.500h3"} stroke="#111" />
                      </Icon>
                    )}
                  </TreeToggle>
                )}
                <TreeLink type="button" $on={label === "$AUDUSD"}>
                  <Glyph name={icon} s={10} />
                  <span>{label}</span>
                </TreeLink>
              </TreeRow>
            ))}
          </TreeList>
        </Tree>
        <Splitter />
        <Main>
          <Tabs $top={0} role="tablist">
            <Tab type="button" role="tab" $w={45}>Instruments</Tab>
            <Tab type="button" role="tab" $w={37}>Optimizer</Tab>
            <Tab type="button" role="tab" $w={55} $on>Walk forward</Tab>
          </Tabs>
          <Panel>
            <TableBox $h={data.tableH}>
              <Results>
                <colgroup>{data.widths.map((w, i) => <Column key={i} $w={w} />)}</colgroup>
                <thead><tr>{data.heads.map((h) => <th key={h}>{h}</th>)}</tr></thead>
                <tbody>
                  <tr>
                    {data.cells.map((c, i) => <Cell key={i} $tone={TONE_BY_COL[i]} $edit={i === data.editing}>{c}</Cell>)}
                  </tr>
                </tbody>
              </Results>
              <TableFill $h={data.fill} />
            </TableBox>
          </Panel>
          <Tabs $top={4} role="tablist">
            {[["Summary", 37], ["Chart", 31], ["Graphs", 31], ["Executions", 43], ["Trades", 31], ["Periods", 31], ["Orders", 28], ["Settings", 34]].map(([t, w]) => (
              <Tab key={t} type="button" role="tab" $w={w} $on={t === "Chart"}>{t}</Tab>
            ))}
          </Tabs>
          <Panel>
            <Bar $h={18}>
              <Grip />
              <Sep $w={9} />
              <Pick $w={46}>
                <select aria-label="Instrument" disabled><option>$AUDUSD</option></select><Caret $off />
              </Pick>
              <Pick $w={30}>
                <select aria-label="Interval" disabled><option>Daily</option></select><Caret $off />
              </Pick>
              <Sep $w={5} />
              <ToolIcon name="candles" w={13} /><Caret />
              <ToolIcon name="pencil" w={14} /><Caret />
              <ToolIcon name="zoomIn" /><ToolIcon name="zoomOut" off />
              <Sep $w={5} />
              <ToolIcon name={data.pointer} w={13} /><Caret />
              <ToolIcon name="preview" />
              <Sep $w={7} />
              <ToolIcon name="flow" off /><ToolIcon name="bars" off /><ToolIcon name="graph" /><ToolIcon name="cash" off /><ToolIcon name="props" />
            </Bar>
            <Chart spec={data.chart} />
            <Scroll>
              <ScrollArrow type="button" aria-label="Scroll left">
                <Icon viewBox="0 0 12 12" $s={8}><path d="M8 1L3 6l5 5" fill="none" stroke="#345" strokeWidth="2.500" /></Icon>
              </ScrollArrow>
              <ScrollTrack $at={data.thumb[0]}>
                <ScrollThumb $w={data.thumb[1]}>
                  <Icon viewBox="0 0 12 12" $s={8}><path d="M2 2v8M5 2v8M8 2v8" stroke="#98b0e8" /></Icon>
                </ScrollThumb>
              </ScrollTrack>
              <ScrollArrow type="button" aria-label="Scroll right">
                <Icon viewBox="0 0 12 12" $s={8}><path d="M4 1l5 5-5 5" fill="none" stroke="#345" strokeWidth="2.500" /></Icon>
              </ScrollArrow>
            </Scroll>
          </Panel>
        </Main>
        <Side><SideTab type="button">Walk Forward Optimization</SideTab></Side>
      </Body>
    </Window>
  );
}

export default function App() {
  return (
    <>
      <GlobalStyle />
      <Desktop>
        <Monitor $grow={1017}>
          <Analyzer active data={LEFT} />
          <Taskbar>
            <Start type="button"><Glyph name="flag" s={13} />Start</Start>
            <Quick>
              {["ie", "outlook", "onenote", "desk", "opera"].map((n) => <Glyph key={n} name={n} s={11} />)}
              <span>»</span>
            </Quick>
            <Task type="button"><Glyph name="outlook" s={11} /><span>Inbox — Outlook - Mi...</span></Task>
            <Task type="button" $on><Glyph name="ninja" s={11} /><span><b>19</b> NinjaTrader appl...</span><Icon viewBox="0 0 12 12" $s={6}><path d="M2 4h8l-4 5z" fill="#fff" /></Icon></Task>
            <Task type="button"><Glyph name="chrome" s={11} /><span>Kalendarz Google - G...</span></Task>
            <Task type="button"><Glyph name="opera" s={11} /><span>Different walkforwar...</span></Task>
            <Task type="button"><Glyph name="paint" s={11} /><span>bez tytułu - Paint</span></Task>
            <Lang><span>PL</span><Glyph name="keyboard" /></Lang>
            <Tray>
              {["chevron", "outlook", "net", "onenote", "sound", "eye", "shield"].map((n) => <Glyph key={n} name={n} s={12} />)}
              <time>13:38</time>
            </Tray>
          </Taskbar>
        </Monitor>
        <Monitor $grow={903}>
          <Analyzer data={RIGHT} />
        </Monitor>
      </Desktop>
    </>
  );
}
